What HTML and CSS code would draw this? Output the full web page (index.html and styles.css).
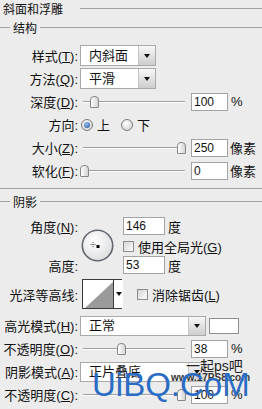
FILE: index.html
```html
<!DOCTYPE html>
<html lang="zh-CN">

<head>
  <meta charset="UTF-8" />
  <title>斜面和浮雕</title>
  <link rel="stylesheet" href="styles.css">
</head>

<body>
  <div class="title"><span>斜面和浮雕</span></div>

  <div class="group-head"><span>结构</span></div>
  <div class="rows rows-bevel">
    <div class="row">
      <label class="lbl">样式(<u>T</u>):</label>
      <div class="select select-short"><span>内斜面</span><i class="drop"></i></div>
    </div>
    <div class="row">
      <label class="lbl">方法(<u>Q</u>):</label>
      <div class="select select-short"><span>平滑</span><i class="drop"></i></div>
    </div>
    <div class="row">
      <label class="lbl">深度(<u>D</u>):</label>
      <div class="slider"><div class="range"><i class="thumb" style="left:10%"></i></div></div>
      <input class="num" type="text" value="100">
      <span class="unit">%</span>
    </div>
    <div class="row">
      <label class="lbl">方向:</label>
      <i class="radio on"></i><span class="opt">上</span>
      <i class="radio radio-next"></i><span class="opt">下</span>
    </div>
    <div class="row">
      <label class="lbl">大小(<u>Z</u>):</label>
      <div class="slider"><div class="range"><i class="thumb" style="left:100%"></i></div></div>
      <input class="num" type="text" value="250">
      <span class="unit unit-px">像素</span>
    </div>
    <div class="row">
      <label class="lbl">软化(<u>F</u>):</label>
      <div class="slider"><div class="range"><i class="thumb" style="left:0%"></i></div></div>
      <input class="num" type="text" value="0">
      <span class="unit unit-px">像素</span>
    </div>
  </div>

  <div class="sep"></div>

  <div class="group-head group-shade"><span>阴影</span></div>
  <div class="angle">
    <label class="lbl lbl-angle">角度(<u>N</u>):</label>
    <svg class="dial" width="33" height="33" viewBox="0 0 33 33">
      <defs>
        <radialGradient id="dialfill" cx="40%" cy="35%" r="70%">
          <stop offset="0" stop-color="#ffffff" />
          <stop offset="1" stop-color="#dcdde0" />
        </radialGradient>
      </defs>
      <circle cx="16.5" cy="16.5" r="15.2" fill="url(#dialfill)" stroke="#62666f" stroke-width="1.6" />
      <path d="M9.5 15.5h5M12 13v5" stroke="#444" stroke-width="1" stroke-dasharray="1 1" />
      <rect x="15.5" y="16" width="3" height="3" fill="#000" />
    </svg>
    <div class="cell cell-angle">
      <input class="num num-wide" type="text" value="146">
      <span class="unit">度</span>
    </div>
    <div class="cell cell-global">
      <i class="check"></i><span class="opt">使用全局光(<u>G</u>)</span>
    </div>
    <label class="lbl lbl-alt">高度:</label>
    <div class="cell cell-alt">
      <input class="num num-wide" type="text" value="53">
      <span class="unit">度</span>
    </div>
  </div>

  <div class="row row-contour">
    <label class="lbl">光泽等高线:</label>
    <div class="contour">
      <svg class="curve" width="30" height="28" viewBox="0 0 30 28">
        <polygon points="2,28 30,2 30,28" fill="#9a9a9a" />
      </svg>
      <i class="drop"></i>
    </div>
    <i class="check check-aa"></i><span class="opt">消除锯齿(<u>L</u>)</span>
  </div>

  <div class="rows">
    <div class="row">
      <label class="lbl">高光模式(<u>H</u>):</label>
      <div class="select select-long"><span>正常</span><i class="drop"></i></div>
      <i class="swatch"></i>
    </div>
    <div class="row">
      <label class="lbl">不透明度(<u>O</u>):</label>
      <div class="slider"><div class="range"><i class="thumb" style="left:38%"></i></div></div>
      <input class="num" type="text" value="38">
      <span class="unit">%</span>
    </div>
    <div class="row">
      <label class="lbl">阴影模式(<u>A</u>):</label>
      <div class="select select-long"><span>正片叠底</span><i class="drop"></i></div>
    </div>
    <div class="row">
      <label class="lbl">不透明度(<u>C</u>):</label>
      <div class="slider"><div class="range"><i class="thumb" style="left:100%"></i></div></div>
      <input class="num" type="text" value="100">
      <span class="unit">%</span>
    </div>
  </div>

  <div class="mark-cn">一起ps吧</div>
  <div class="mark-url">www.17PS8.com</div>
  <div class="mark-en">UiBQ.CoM</div>
</body>

</html>
```

FILE: styles.css
```css
body {
  margin: 0;
  width: 262px;
  height: 409px;
  overflow: hidden;
  position: relative;
  background: #ececec;
  font-family: "Liberation Sans", "Noto Sans CJK SC", sans-serif;
  font-size: 13px;
  color: #111;
}

/* section titles with etched lines */
.title {
  display: flex;
  align-items: center;
  height: 17px;
  padding-left: 3px;
  font-size: 12px;
}

.title::after {
  content: "";
  flex: 1;
  margin-left: 17px;
  border-top: 1px solid #a2a2a2;
}

.group-head {
  display: flex;
  align-items: center;
  height: 17px;
  margin-top: 2px;
  font-size: 12px;
}

.group-head::before {
  content: "";
  width: 10px;
  border-top: 1px solid #a2a2a2;
}

.group-head::after {
  content: "";
  flex: 1;
  border-top: 1px solid #a2a2a2;
}

.group-head span {
  margin: 0 3px;
}

.group-shade {
  margin-top: 4px;
}

.sep {
  margin-top: 6px;
  border-top: 1px solid #a2a2a2;
}

/* rows */
.rows-bevel {
  padding-top: 8px;
}

.row {
  display: flex;
  align-items: center;
  height: 23px;
}

.lbl {
  flex: none;
  width: 78px;
  text-align: right;
  white-space: nowrap;
}

/* dropdowns */
.select {
  flex: none;
  display: flex;
  align-items: stretch;
  margin-left: 2px;
  height: 21px;
  border: 1px solid #a9a9a9;
  background: #fff;
  box-sizing: border-box;
}

.select span {
  flex: 1;
  padding-left: 8px;
  line-height: 19px;
}

.select-short {
  width: 76px;
}

.select-long {
  width: 126px;
  height: 20px;
}

.select-long span {
  line-height: 18px;
}

.drop {
  flex: none;
  display: flex;
  align-items: center;
  justify-content: center;
  width: 16px;
  background: linear-gradient(#f8f8f8, #cdcdcd);
  border-left: 1px solid #c4c4c4;
}

.drop::after {
  content: "";
  border-top: 4px solid #111;
  border-left: 3.5px solid transparent;
  border-right: 3.5px solid transparent;
}

.swatch {
  flex: none;
  margin-left: 3px;
  width: 30px;
  height: 16px;
  border: 1px solid #8e8e8e;
  background: #fff;
  box-sizing: border-box;
}

/* sliders */
.slider {
  flex: none;
  position: relative;
  margin-left: 2px;
  width: 108px;
  height: 14px;
}

.slider::before {
  content: "";
  position: absolute;
  left: 3px;
  right: 3px;
  top: 6px;
  height: 1px;
  background: #9e9e9e;
  box-shadow: 0 1px #fff;
}

.range {
  position: absolute;
  left: 0;
  top: 0;
  width: 97px;
  height: 14px;
}

.thumb {
  position: absolute;
  top: 1px;
  width: 9px;
  height: 12px;
  border: 1px solid #878787;
  border-radius: 4px 4px 1px 1px;
  background: linear-gradient(90deg, #fff, #d4d4d4);
  box-sizing: border-box;
}

/* number fields */
.num {
  flex: none;
  margin: 0 0 0 3px;
  width: 37px;
  height: 18px;
  padding: 0 2px;
  border: 1px solid #a3a3a3;
  background: #fff;
  box-sizing: border-box;
  font-family: "Liberation Sans", sans-serif;
  font-size: 12px;
  color: #111;
}

.num-wide {
  margin-left: 0;
  width: 42px;
}

.unit {
  margin-left: 3px;
}

.unit-px {
  margin-left: 2px;
}

/* radio and checkbox */
.radio {
  flex: none;
  display: flex;
  align-items: center;
  justify-content: center;
  margin-left: 3px;
  width: 12px;
  height: 12px;
  border-radius: 50%;
  border: 1px solid #7c7c7c;
  background: radial-gradient(circle at 40% 35%, #fff, #cbcbcb);
  box-sizing: border-box;
}

.radio.on::after {
  content: "";
  width: 6px;
  height: 6px;
  border-radius: 50%;
  background: radial-gradient(circle at 40% 35%, #9cc2f2, #1c4c98);
}

.radio-next {
  margin-left: 11px;
}

.opt {
  margin-left: 4px;
  white-space: nowrap;
}

.check {
  flex: none;
  width: 11px;
  height: 11px;
  border: 1px solid #8d8d8d;
  background: linear-gradient(135deg, #d4d4d4, #fdfdfd);
  box-sizing: border-box;
}

/* angle block */
.angle {
  display: grid;
  grid-template-columns: 78px 45px auto;
  grid-template-rows: 18px 21px 18px;
  padding-top: 7px;
}

.lbl-angle {
  grid-column: 1;
  grid-row: 1;
  align-self: center;
}

.dial {
  grid-column: 2;
  grid-row: 1 / 4;
  align-self: center;
  margin-left: 3px;
}

.cell {
  display: flex;
  align-items: center;
  grid-column: 3;
}

.cell-angle {
  grid-row: 1;
}

.cell-global {
  grid-row: 2;
  align-self: start;
  margin-top: 2px;
}

.cell-alt {
  grid-row: 3;
}

.lbl-alt {
  grid-column: 1;
  grid-row: 3;
  align-self: center;
}

/* gloss contour */
.row-contour {
  height: 30px;
  margin: 5px 0;
}

.contour {
  flex: none;
  display: flex;
  margin-left: 4px;
  width: 40px;
  height: 30px;
  border: 1px solid #3a3a3a;
  background: #fff;
  box-sizing: border-box;
}

.curve {
  flex: none;
}

.contour .drop {
  width: 9px;
  background: #fff;
  border-left: 1px solid #3a3a3a;
}

.check-aa {
  margin-left: 15px;
}

/* watermark over the screenshot */
.mark-cn {
  position: absolute;
  left: 186px;
  top: 355px;
  font-size: 14px;
  color: #222;
}

.mark-url {
  position: absolute;
  left: 171px;
  top: 372px;
  font-size: 10px;
  font-weight: bold;
  color: #333;
  text-shadow: 0 0 2px #fff;
}

.mark-en {
  position: absolute;
  left: 92px;
  top: 368px;
  font-size: 33px;
  line-height: 33px;
  color: #2b6cc4;
}
```
